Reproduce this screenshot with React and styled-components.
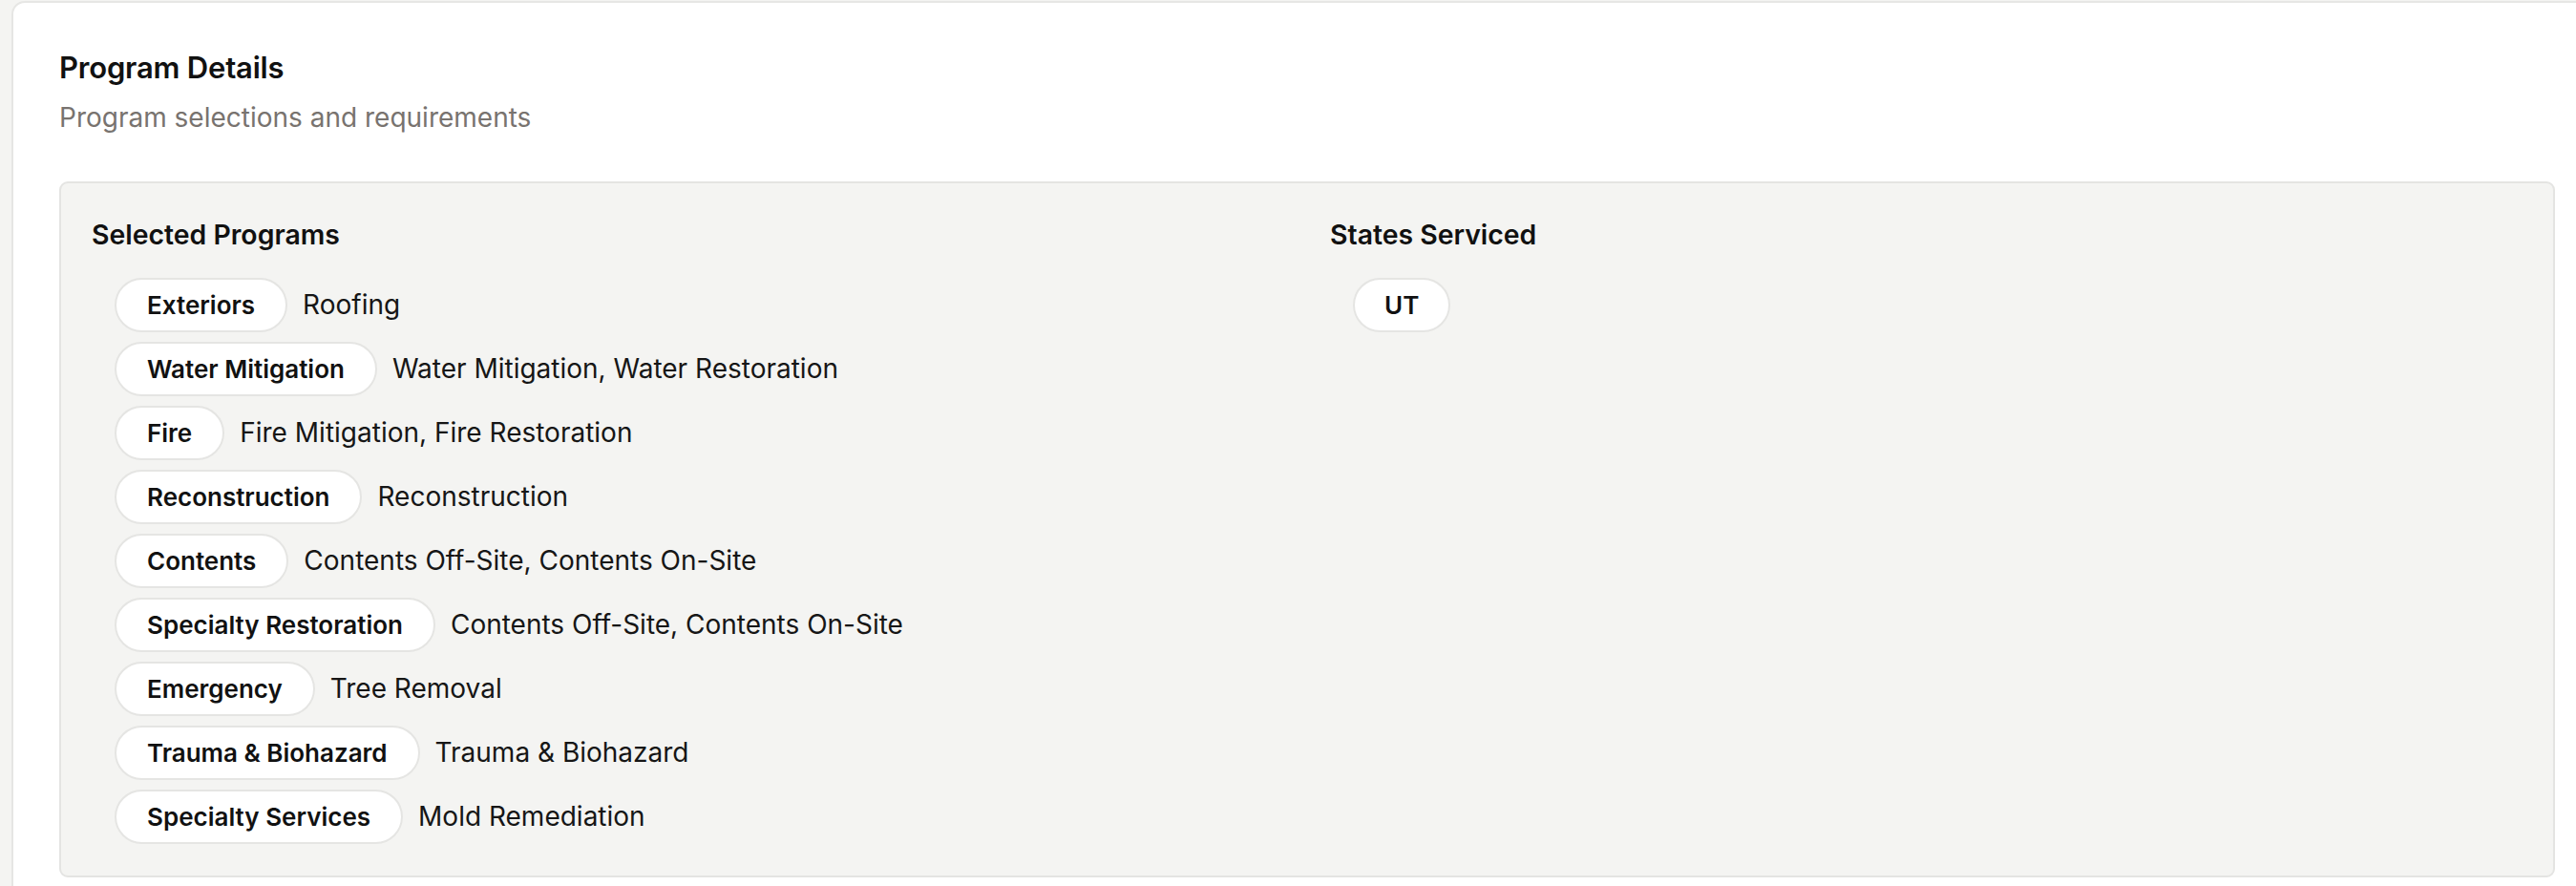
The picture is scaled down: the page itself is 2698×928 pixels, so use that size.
import React from "react";
import styled, { createGlobalStyle } from "styled-components";

const GlobalStyle = createGlobalStyle`
  html, body {
    margin: 0;
    padding: 0;
    background: #f4f4f2;
  }
  body {
    font-family: Inter, "Noto Sans", "Liberation Sans", sans-serif;
    color: #111111;
    -webkit-font-smoothing: antialiased;
  }
`;

const Page = styled.div`
  height: 928px;
  overflow: hidden;
  padding: 1px 0 0 12px;
  box-sizing: border-box;
`;

const Card = styled.section`
  width: 2714px;
  min-height: 1000px;
  box-sizing: border-box;
  background: #ffffff;
  border: 2px solid #e6e6e4;
  border-radius: 14px;
  padding: 44px 48px 0 48px;
`;

const Title = styled.h2`
  margin: 0;
  font-size: 31px;
  line-height: 48px;
  font-weight: 600;
  letter-spacing: -0.2px;
  color: #111111;
`;

const Subtitle = styled.p`
  margin: 7px 0 0 0;
  font-size: 28px;
  line-height: 43px;
  font-weight: 400;
  color: #78736f;
`;

const Panel = styled.div`
  margin-top: 45px;
  background: #f4f4f2;
  border: 2px solid #e4e4e2;
  border-radius: 9px;
  padding: 32px 32px 33px 32px;
  display: grid;
  grid-template-columns: 1fr 1fr;
  column-gap: 48px;
`;

const Column = styled.div`
  display: flex;
  flex-direction: column;
  gap: 24px;
`;

const SectionHeading = styled.h3`
  margin: 0;
  font-size: 28.4px;
  line-height: 43px;
  font-weight: 600;
  color: #111111;
`;

const List = styled.div`
  display: flex;
  flex-direction: column;
  gap: 10px;
  padding-left: 24px;
`;

const Row = styled.div`
  display: flex;
  align-items: center;
  gap: 16px;
`;

const Chip = styled.span`
  display: inline-flex;
  align-items: center;
  justify-content: center;
  height: 57px;
  box-sizing: border-box;
  padding: 0 ${(p) => (p.$compact ? "31px" : "32px")};
  background: #ffffff;
  border: 2px solid #e5e5e3;
  border-radius: 999px;
  font-size: 26px;
  font-weight: 600;
  color: #111111;
  white-space: nowrap;
`;

const Description = styled.span`
  font-size: 28px;
  line-height: 43px;
  color: #161616;
  white-space: nowrap;
`;

const programs = [
  ["Exteriors", "Roofing"],
  ["Water Mitigation", "Water Mitigation, Water Restoration"],
  ["Fire", "Fire Mitigation, Fire Restoration"],
  ["Reconstruction", "Reconstruction"],
  ["Contents", "Contents Off-Site, Contents On-Site"],
  ["Specialty Restoration", "Contents Off-Site, Contents On-Site"],
  ["Emergency", "Tree Removal"],
  ["Trauma & Biohazard", "Trauma & Biohazard"],
  ["Specialty Services", "Mold Remediation"],
];

const states = ["UT"];

export default function App() {
  return (
    <>
      <GlobalStyle />
      <Page>
        <Card>
          <Title>Program Details</Title>
          <Subtitle>Program selections and requirements</Subtitle>
          <Panel>
            <Column>
              <SectionHeading>Selected Programs</SectionHeading>
              <List>
                {programs.map(([name, desc]) => (
                  <Row key={name}>
                    <Chip>{name}</Chip>
                    <Description>{desc}</Description>
                  </Row>
                ))}
              </List>
            </Column>
            <Column>
              <SectionHeading>States Serviced</SectionHeading>
              <List>
                {states.map((s) => (
                  <Row key={s}>
                    <Chip $compact>{s}</Chip>
                  </Row>
                ))}
              </List>
            </Column>
          </Panel>
        </Card>
      </Page>
    </>
  );
}
